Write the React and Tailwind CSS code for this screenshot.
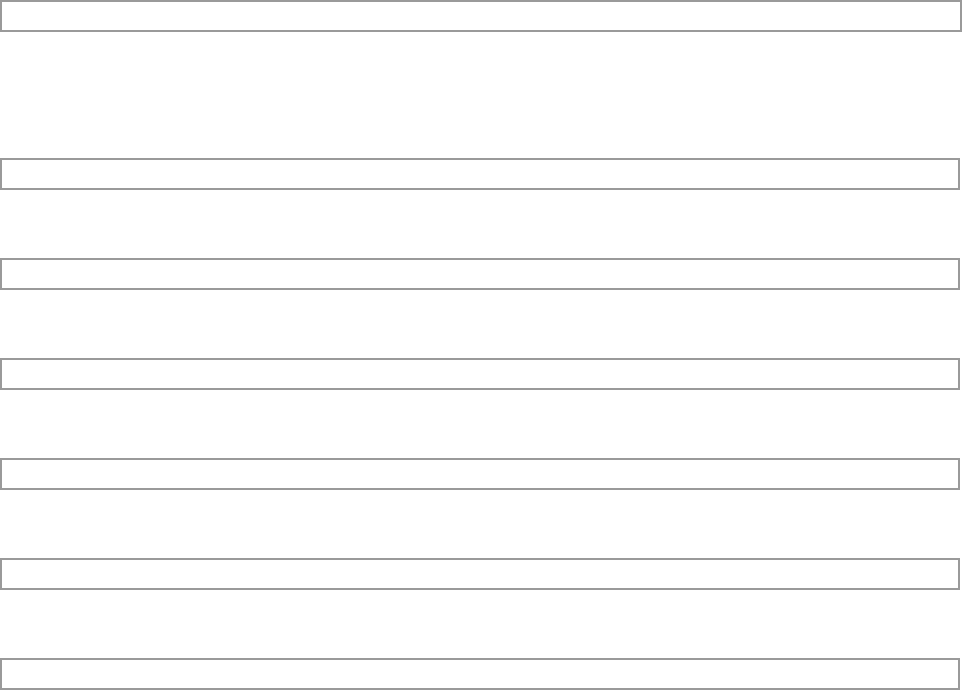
export default function App() {
  const rows = [0, 1, 2, 3, 4, 5];
  return (
    <div className="w-[962px] h-[690px] bg-white flex flex-col" style={{ fontFamily: '"Liberation Sans", Arial, sans-serif' }}>
      <div className="w-full h-8 border-2 border-[#9a9a9a] shrink-0" />
      <div className="flex flex-col gap-[68px] mt-[126px]">
        {rows.map((r) => (
          <div key={r} className="w-[960px] h-8 border-2 border-[#9a9a9a] shrink-0" />
        ))}
      </div>
    </div>
  );
}
